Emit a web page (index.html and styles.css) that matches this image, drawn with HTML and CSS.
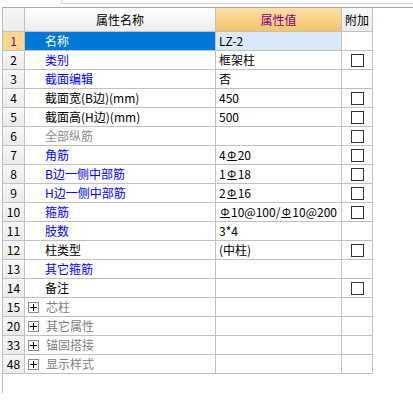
FILE: index.html
```html
<!DOCTYPE html>
<html lang="zh-CN">
<head>
    <meta charset="utf-8">
    <title>属性编辑</title>
    <link rel="stylesheet" href="styles.css">
</head>
<body>

<div class="topbar"><div class="tab-edge"></div></div>

<div class="panel">
    <div class="grid">
        <div class="cell head num"></div>
        <div class="cell head name">属性名称</div>
        <div class="cell head value">属性值</div>
        <div class="cell head extra">附加</div>

        <div class="cell num sel">1</div>
        <div class="cell name sel">名称</div>
        <div class="cell value sel">LZ-2</div>
        <div class="cell extra"></div>

        <div class="cell num">2</div>
        <div class="cell name blue">类别</div>
        <div class="cell value">框架柱</div>
        <div class="cell extra"><span class="check"></span></div>

        <div class="cell num">3</div>
        <div class="cell name blue">截面编辑</div>
        <div class="cell value">否</div>
        <div class="cell extra"></div>

        <div class="cell num">4</div>
        <div class="cell name">截面宽(B边)(mm)</div>
        <div class="cell value">450</div>
        <div class="cell extra"><span class="check"></span></div>

        <div class="cell num">5</div>
        <div class="cell name">截面高(H边)(mm)</div>
        <div class="cell value">500</div>
        <div class="cell extra"><span class="check"></span></div>

        <div class="cell num">6</div>
        <div class="cell name grey">全部纵筋</div>
        <div class="cell value"></div>
        <div class="cell extra"><span class="check"></span></div>

        <div class="cell num">7</div>
        <div class="cell name blue">角筋</div>
        <div class="cell value">4<span class="bar">Φ</span>20</div>
        <div class="cell extra"><span class="check"></span></div>

        <div class="cell num">8</div>
        <div class="cell name blue">B边一侧中部筋</div>
        <div class="cell value">1<span class="bar">Φ</span>18</div>
        <div class="cell extra"><span class="check"></span></div>

        <div class="cell num">9</div>
        <div class="cell name blue">H边一侧中部筋</div>
        <div class="cell value">2<span class="bar">Φ</span>16</div>
        <div class="cell extra"><span class="check"></span></div>

        <div class="cell num">10</div>
        <div class="cell name blue">箍筋</div>
        <div class="cell value"><span class="bar">Φ</span>10@100/<span class="bar">Φ</span>10@200</div>
        <div class="cell extra"><span class="check"></span></div>

        <div class="cell num">11</div>
        <div class="cell name blue">肢数</div>
        <div class="cell value">3*4</div>
        <div class="cell extra"></div>

        <div class="cell num">12</div>
        <div class="cell name">柱类型</div>
        <div class="cell value">(中柱)</div>
        <div class="cell extra"><span class="check"></span></div>

        <div class="cell num">13</div>
        <div class="cell name blue">其它箍筋</div>
        <div class="cell value"></div>
        <div class="cell extra"></div>

        <div class="cell num">14</div>
        <div class="cell name">备注</div>
        <div class="cell value"></div>
        <div class="cell extra"><span class="check"></span></div>

        <div class="cell num">15</div>
        <div class="cell name group"><svg class="plus" viewBox="0 0 11 11"><rect x="0.5" y="0.5" width="10" height="10" fill="#fff" stroke="#8c8c8c"/><path d="M2 5.5h7M5.5 2v7" stroke="#000"/></svg>芯柱</div>
        <div class="cell value"></div>
        <div class="cell extra"></div>

        <div class="cell num">20</div>
        <div class="cell name group"><svg class="plus" viewBox="0 0 11 11"><rect x="0.5" y="0.5" width="10" height="10" fill="#fff" stroke="#8c8c8c"/><path d="M2 5.5h7M5.5 2v7" stroke="#000"/></svg>其它属性</div>
        <div class="cell value"></div>
        <div class="cell extra"></div>

        <div class="cell num">33</div>
        <div class="cell name group"><svg class="plus" viewBox="0 0 11 11"><rect x="0.5" y="0.5" width="10" height="10" fill="#fff" stroke="#8c8c8c"/><path d="M2 5.5h7M5.5 2v7" stroke="#000"/></svg>锚固搭接</div>
        <div class="cell value"></div>
        <div class="cell extra"></div>

        <div class="cell num">48</div>
        <div class="cell name group"><svg class="plus" viewBox="0 0 11 11"><rect x="0.5" y="0.5" width="10" height="10" fill="#fff" stroke="#8c8c8c"/><path d="M2 5.5h7M5.5 2v7" stroke="#000"/></svg>显示样式</div>
        <div class="cell value"></div>
        <div class="cell extra"></div>
    </div>
</div>

</body>
</html>
```

FILE: styles.css
```css
* {
    margin: 0;
    padding: 0;
    box-sizing: border-box;
}

body {
    background: #fff;
    font-family: "SimSun", "Noto Sans CJK SC", sans-serif;
    font-size: 12px;
    color: #000;
}

.topbar {
    height: 7px;
}

.tab-edge {
    margin-left: 61px;
    height: 4px;
    border-left: 1px solid #d4d4d4;
    border-bottom: 1px solid #d4d4d4;
}

.panel {
    margin-left: 2px;
    height: 386px;
    border-top: 1px solid #a9a9a9;
    border-left: 1px solid #bdbdbd;
}

.grid {
    display: grid;
    grid-template-columns: 21px 190px 125px 30px;
    grid-template-rows: 23px repeat(18, 18px);
    gap: 1px;
    width: 370px;
    padding: 0 1px 1px 0;
    background: #c0c0c0;
}

.cell {
    background: #fff;
    display: flex;
    align-items: center;
    line-height: 18px;
    white-space: nowrap;
    overflow: hidden;
}

.head {
    justify-content: center;
    background: linear-gradient(#ffffff, #ececec);
}

.head.value {
    color: #800080;
    background: linear-gradient(#fde0a6, #f4c46b);
}

.head.extra {
    background: linear-gradient(#f8f8f8, #eaeaea);
}

.num {
    justify-content: center;
    background: linear-gradient(#f7f7f7, #ebebeb);
}

.num.sel {
    color: #800080;
    background: #fed68f;
}

.name {
    padding-left: 20px;
}

.name.sel {
    background: #0078d7;
    color: #fff;
}

.value {
    padding-left: 3px;
}

.value.sel {
    background: #d9e9f7;
}

.extra {
    justify-content: center;
}

.head.name,
.head.value,
.head.extra {
    padding-left: 0;
}

.blue {
    color: #0000ff;
}

.grey {
    color: #8c8c8c;
}

.group {
    padding-left: 3px;
    color: #808080;
}

.plus {
    width: 11px;
    height: 11px;
    margin-right: 7px;
    flex: none;
}

.check {
    display: block;
    width: 13px;
    height: 13px;
    margin-left: 1px;
    border: 1px solid #333;
    background: #fff;
}

.bar {
    display: inline-block;
    width: 10px;
    margin: 0 1px;
    line-height: 11px;
    text-align: center;
    border-bottom: 1px solid #000;
    font-size: 11px;
}
```
